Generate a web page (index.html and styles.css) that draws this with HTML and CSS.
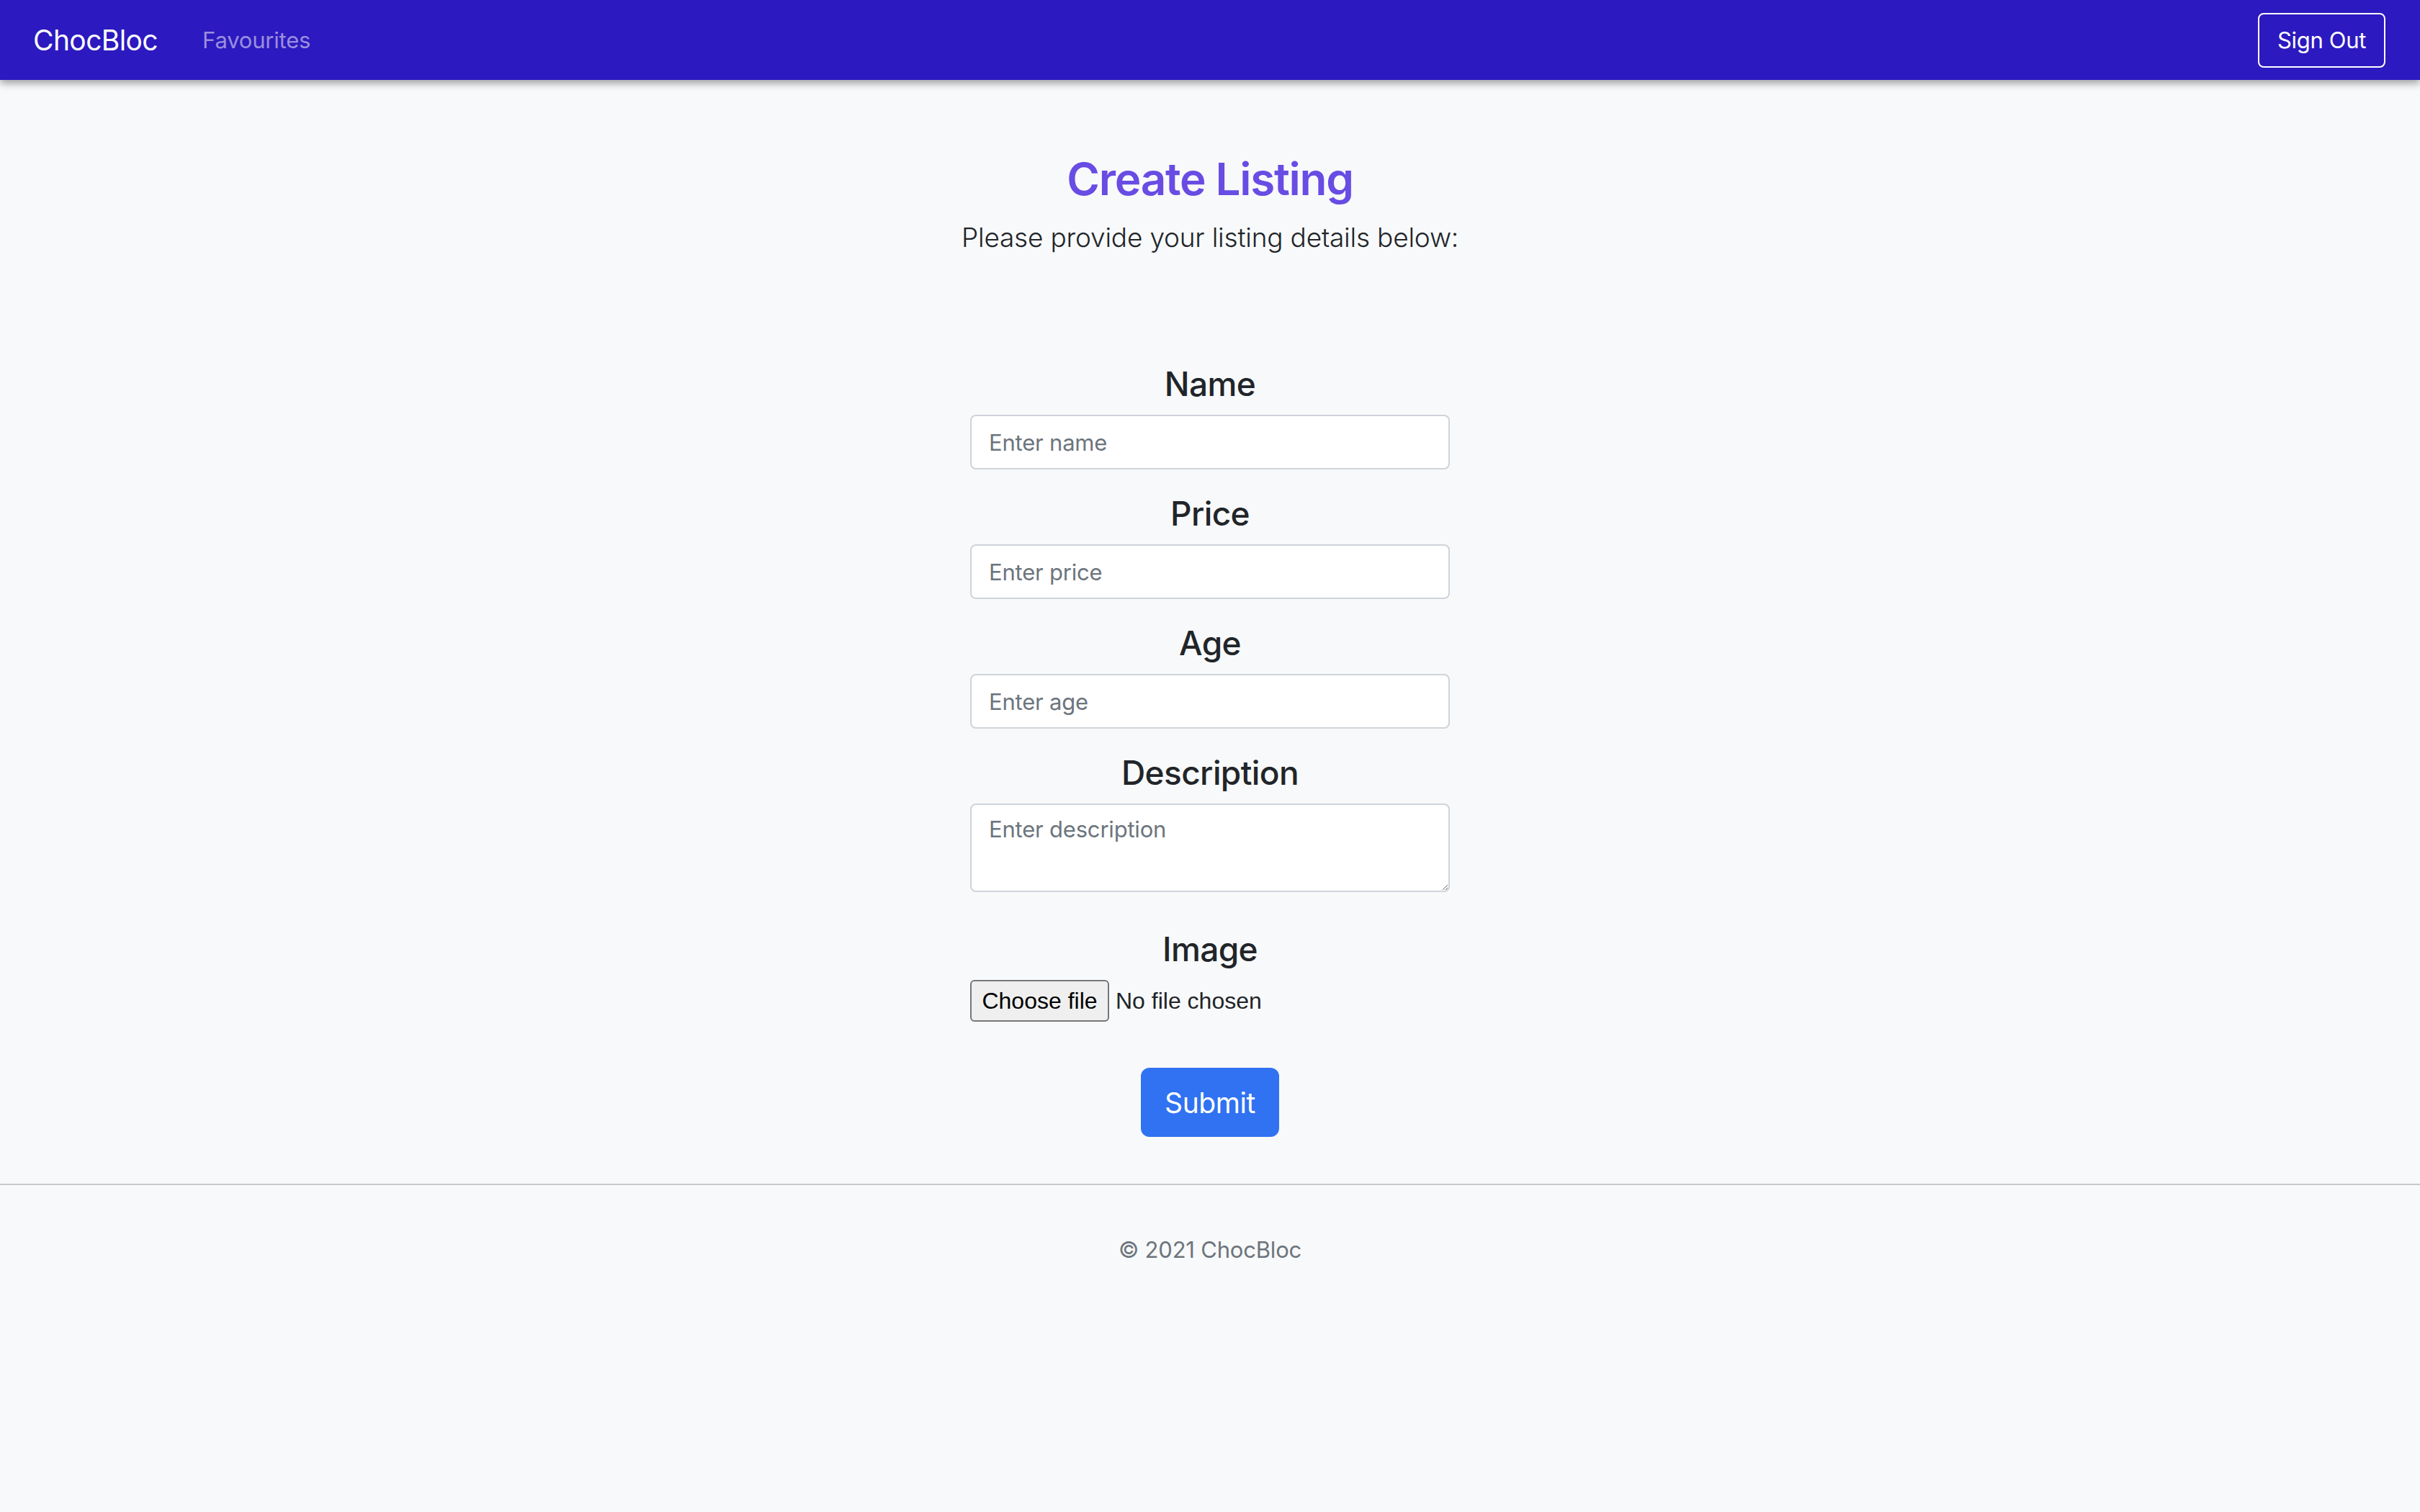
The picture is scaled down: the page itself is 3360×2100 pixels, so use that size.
FILE: index.html
```html
<!DOCTYPE html>
<html lang="en">
<head>
<meta charset="utf-8">
<title>ChocBloc - Create Listing</title>
<link rel="stylesheet" href="styles.css">
</head>
<body>
<nav class="navbar">
  <div class="nav-left">
    <a class="brand" href="#">ChocBloc</a>
    <a class="nav-link" href="#">Favourites</a>
  </div>
  <button class="btn-outline" type="button">Sign Out</button>
</nav>

<main class="main">
  <h2 class="title">Create Listing</h2>
  <p class="lead">Please provide your listing details below:</p>

  <form class="form">
    <div class="group">
      <label class="label" for="name">Name</label>
      <input class="control" id="name" type="text" placeholder="Enter name">
    </div>
    <div class="group">
      <label class="label" for="price">Price</label>
      <input class="control" id="price" type="text" placeholder="Enter price">
    </div>
    <div class="group">
      <label class="label" for="age">Age</label>
      <input class="control" id="age" type="text" placeholder="Enter age">
    </div>
    <div class="group group-desc">
      <label class="label" for="desc">Description</label>
      <textarea class="control textarea" id="desc" rows="2" placeholder="Enter description"></textarea>
    </div>
    <div class="group group-image">
      <span class="label">Image</span>
      <div class="file-row">
        <input class="file-input" id="image" type="file">
        <label class="file-btn" for="image">Choose file</label>
        <span class="file-name">No file chosen</span>
      </div>
    </div>
    <div class="actions">
      <button class="btn-primary" type="submit">Submit</button>
    </div>
  </form>
</main>

<footer class="footer">
  <p class="copy">© 2021 ChocBloc</p>
</footer>
</body>
</html>
```

FILE: styles.css
```css
* {
  box-sizing: border-box;
}

html, body {
  margin: 0;
  padding: 0;
}

body {
  background: #f8f9fa;
  font-family: Inter, "Noto Sans", "Liberation Sans", sans-serif;
  color: #212529;
  min-height: 2100px;
}

.navbar {
  height: 111px;
  background: #2c19bf;
  display: flex;
  align-items: center;
  justify-content: space-between;
  padding: 0 48px 0 46px;
  box-shadow: 0 5px 10px rgba(0, 0, 0, 0.35);
  position: relative;
  z-index: 1;
}

.nav-left {
  display: flex;
  align-items: center;
  gap: 62px;
}

.brand {
  color: #ffffff;
  text-decoration: none;
  font-size: 39px;
  font-weight: 400;
  letter-spacing: -0.6px;
}

.nav-link {
  color: #998fdd;
  text-decoration: none;
  font-size: 31px;
  letter-spacing: -0.2px;
}

.btn-outline {
  font-family: inherit;
  background: transparent;
  color: #ffffff;
  border: 2px solid #ffffff;
  border-radius: 8px;
  font-size: 31px;
  height: 76px;
  width: 177px;
  padding: 0;
  letter-spacing: -0.3px;
}

.main {
  display: flex;
  flex-direction: column;
  align-items: center;
  padding-top: 99px;
}

.title {
  margin: 0;
  color: #684ce3;
  font-size: 62px;
  font-weight: 600;
  line-height: 77px;
  letter-spacing: -1.3px;
}

.lead {
  margin: 13px 0 0;
  font-size: 37px;
  font-weight: 300;
  line-height: 60px;
  letter-spacing: -0.2px;
}

.form {
  width: 666px;
  margin-top: 144px;
  display: flex;
  flex-direction: column;
  align-items: stretch;
}

.group {
  display: flex;
  flex-direction: column;
  align-items: stretch;
  margin-bottom: 32px;
}

.group-desc {
  margin-bottom: 50px;
}

.group-image {
  margin-bottom: 64px;
}

.label {
  text-align: center;
  font-size: 46px;
  font-weight: 500;
  line-height: 58px;
  margin-bottom: 14px;
  letter-spacing: -0.6px;
}

.control {
  font-family: inherit;
  height: 76px;
  border: 2px solid #ced4da;
  border-radius: 8px;
  background: #ffffff;
  padding: 0 24px;
  font-size: 31px;
  color: #212529;
  letter-spacing: -0.2px;
}

.control::placeholder {
  color: #6c757d;
}

.textarea {
  height: 123px;
  padding-top: 10px;
  line-height: 48px;
  resize: vertical;
}

.file-row {
  display: flex;
  align-items: center;
  gap: 9px;
  height: 58px;
  font-family: "Liberation Sans", Arial, sans-serif;
  font-size: 32px;
}

.file-input {
  position: absolute;
  width: 1px;
  height: 1px;
  opacity: 0;
  overflow: hidden;
}

.file-btn {
  display: flex;
  align-items: center;
  justify-content: center;
  color: #000000;
  background: #efefef;
  border: 2px solid #767676;
  border-radius: 6px;
  height: 58px;
  width: 193px;
  padding: 0 12px;
}

.file-name {
  color: #212529;
}

.actions {
  display: flex;
  justify-content: center;
}

.btn-primary {
  font-family: inherit;
  background: #3072f1;
  color: #ffffff;
  border: none;
  border-radius: 12px;
  width: 192px;
  height: 96px;
  font-size: 39px;
  letter-spacing: -0.4px;
  padding: 0;
}

.footer {
  margin-top: 65px;
  border-top: 2px solid #c8c9ca;
  display: flex;
  justify-content: center;
  padding-top: 70px;
}

.copy {
  margin: 0;
  color: #6c757d;
  font-size: 31px;
  line-height: 40px;
  letter-spacing: -0.2px;
}
```
